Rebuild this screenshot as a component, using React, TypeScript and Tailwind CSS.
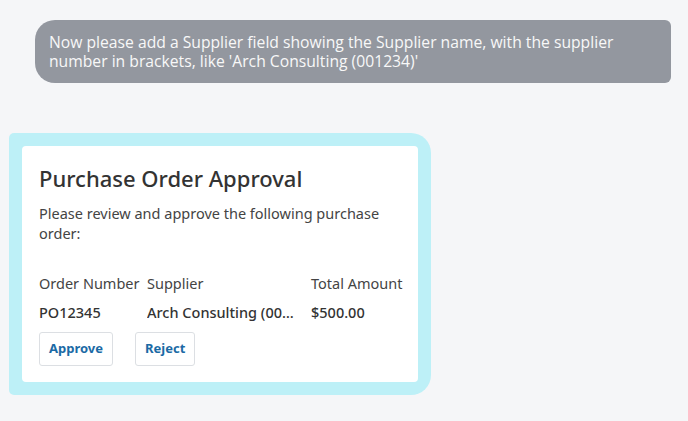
export default function App() {
  return (
    <div className="min-h-[421px] w-[688px] bg-[#f5f6f8] pt-5 font-['Open_Sans',sans-serif]">
      <div className="ml-[35px] mr-[17px] rounded-l-[20px] rounded-r-[6px] bg-[#93979f] pl-[14px] pr-[30px] pt-[13px] pb-[12px] font-['Open_Sans',sans-serif] text-[15.7px] leading-[19px] text-[#f8f8f8]">
        Now please add a Supplier field showing the Supplier name, with the supplier number in brackets, like 'Arch Consulting (001234)'
      </div>

      <div className="ml-[9px] mt-[50px] w-[422px] rounded-tl-[5px] rounded-bl-[5px] rounded-tr-[20px] rounded-br-[20px] bg-[#bdf0f7] p-[13px]">
        <div className="rounded-[4px] bg-white px-[17px] pt-[17px] pb-[16px] font-['Noto_Sans',sans-serif] text-[#333]">
          <h2 className="text-[22px] leading-[30px] font-medium text-[#333]">Purchase Order Approval</h2>
          <p className="mt-[10px] text-[14.5px] leading-[20px] text-[#444]">
            Please review and approve the following purchase order:
          </p>
          <div className="mt-[30px] grid grid-cols-[108px_164px_auto] text-[14.5px] leading-[20px] whitespace-nowrap">
            <div className="text-[#444]">Order Number</div>
            <div className="text-[#444]">Supplier</div>
            <div className="text-[#444]">Total Amount</div>
            <div className="mt-[9px] font-medium">PO12345</div>
            <div className="mt-[9px] truncate pr-[12px] font-medium">Arch Consulting (001234)</div>
            <div className="mt-[9px] font-medium">$500.00</div>
          </div>
          <div className="mt-[10px] flex gap-[22px]">
            <button className="h-[34px] rounded-[3px] border border-[#dcdfe3] px-[9px] text-[13px] font-bold text-[#1b6aa5]">
              Approve
            </button>
            <button className="h-[34px] rounded-[3px] border border-[#dcdfe3] px-[9px] text-[13px] font-bold text-[#1b6aa5]">
              Reject
            </button>
          </div>
        </div>
      </div>
    </div>
  );
}
